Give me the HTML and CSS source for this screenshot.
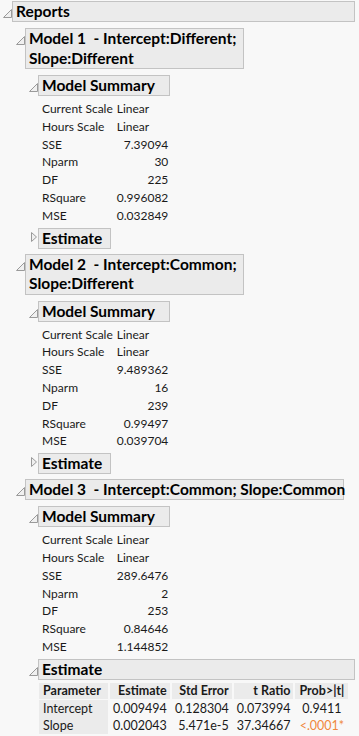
FILE: index.html
```html
<!DOCTYPE html>
<html lang="en">
<head>
  <meta charset="UTF-8">
  <meta name="viewport" content="width=device-width, initial-scale=1.0">
  <title>Reports</title>
  <link rel="stylesheet" href="styles.css">
</head>
<body>

  <div class="node">
    <div class="head">
      <svg class="tri" width="9" height="9" viewBox="0 0 9 9"><path d="M0.5 8.5 L8.5 8.5 L8.5 0.5 Z"/></svg>
      <div class="box box_reports">Reports</div>
    </div>
    <div class="body">

      <!-- Model 1 -->
      <div class="node">
        <div class="head">
          <svg class="tri" width="9" height="9" viewBox="0 0 9 9"><path d="M0.5 8.5 L8.5 8.5 L8.5 0.5 Z"/></svg>
          <div class="box box_model">Model 1 &nbsp;- Intercept:Different;<br>Slope:Different</div>
        </div>
        <div class="body">
          <div class="node">
            <div class="head">
              <svg class="tri" width="9" height="9" viewBox="0 0 9 9"><path d="M0.5 8.5 L8.5 8.5 L8.5 0.5 Z"/></svg>
              <div class="box box_summary">Model Summary</div>
            </div>
            <table class="summary">
              <tr><td>Current Scale</td><td class="txt">Linear</td></tr>
              <tr><td>Hours Scale</td><td class="txt">Linear</td></tr>
              <tr><td>SSE</td><td>7.39094</td></tr>
              <tr><td>Nparm</td><td>30</td></tr>
              <tr><td>DF</td><td>225</td></tr>
              <tr><td>RSquare</td><td>0.996082</td></tr>
              <tr><td>MSE</td><td>0.032849</td></tr>
            </table>
          </div>
          <div class="node">
            <div class="head">
              <svg class="tri closed" width="9" height="10" viewBox="0 0 9 10"><path d="M2.5 0.5 L7.5 5 L2.5 9.5 Z"/></svg>
              <div class="box box_est">Estimate</div>
            </div>
          </div>
        </div>
      </div>

      <!-- Model 2 -->
      <div class="node">
        <div class="head">
          <svg class="tri" width="9" height="9" viewBox="0 0 9 9"><path d="M0.5 8.5 L8.5 8.5 L8.5 0.5 Z"/></svg>
          <div class="box box_model">Model 2 &nbsp;- Intercept:Common;<br>Slope:Different</div>
        </div>
        <div class="body">
          <div class="node">
            <div class="head">
              <svg class="tri" width="9" height="9" viewBox="0 0 9 9"><path d="M0.5 8.5 L8.5 8.5 L8.5 0.5 Z"/></svg>
              <div class="box box_summary">Model Summary</div>
            </div>
            <table class="summary">
              <tr><td>Current Scale</td><td class="txt">Linear</td></tr>
              <tr><td>Hours Scale</td><td class="txt">Linear</td></tr>
              <tr><td>SSE</td><td>9.489362</td></tr>
              <tr><td>Nparm</td><td>16</td></tr>
              <tr><td>DF</td><td>239</td></tr>
              <tr><td>RSquare</td><td>0.99497</td></tr>
              <tr><td>MSE</td><td>0.039704</td></tr>
            </table>
          </div>
          <div class="node">
            <div class="head">
              <svg class="tri closed" width="9" height="10" viewBox="0 0 9 10"><path d="M2.5 0.5 L7.5 5 L2.5 9.5 Z"/></svg>
              <div class="box box_est">Estimate</div>
            </div>
          </div>
        </div>
      </div>

      <!-- Model 3 -->
      <div class="node">
        <div class="head">
          <svg class="tri" width="9" height="9" viewBox="0 0 9 9"><path d="M0.5 8.5 L8.5 8.5 L8.5 0.5 Z"/></svg>
          <div class="box box_model3">Model 3 &nbsp;- Intercept:Common; Slope:Common</div>
        </div>
        <div class="body">
          <div class="node">
            <div class="head">
              <svg class="tri" width="9" height="9" viewBox="0 0 9 9"><path d="M0.5 8.5 L8.5 8.5 L8.5 0.5 Z"/></svg>
              <div class="box box_summary">Model Summary</div>
            </div>
            <table class="summary">
              <tr><td>Current Scale</td><td class="txt">Linear</td></tr>
              <tr><td>Hours Scale</td><td class="txt">Linear</td></tr>
              <tr><td>SSE</td><td>289.6476</td></tr>
              <tr><td>Nparm</td><td>2</td></tr>
              <tr><td>DF</td><td>253</td></tr>
              <tr><td>RSquare</td><td>0.84646</td></tr>
              <tr><td>MSE</td><td>1.144852</td></tr>
            </table>
          </div>
          <div class="node">
            <div class="head">
              <svg class="tri" width="9" height="9" viewBox="0 0 9 9"><path d="M0.5 8.5 L8.5 8.5 L8.5 0.5 Z"/></svg>
              <div class="box box_est3">Estimate</div>
            </div>
            <table class="estimates">
              <tr>
                <th class="left">Parameter</th>
                <th class="c_est">Estimate</th>
                <th class="c_std">Std Error</th>
                <th class="c_t">t Ratio</th>
                <th class="c_p">Prob&gt;|t|</th>
              </tr>
              <tr>
                <td class="param">Intercept</td>
                <td>0.009494</td>
                <td>0.128304</td>
                <td>0.073994</td>
                <td class="c_p">0.9411</td>
              </tr>
              <tr>
                <td class="param">Slope</td>
                <td>0.002043</td>
                <td>5.471e-5</td>
                <td>37.34667</td>
                <td class="c_p sig">&lt;.0001*</td>
              </tr>
            </table>
          </div>
        </div>
      </div>

    </div>
  </div>

</body>
</html>
```

FILE: styles.css
```css
* {
  box-sizing: border-box;
  padding: 0;
  margin: 0;
}

body {
  background-color: #f8f8f8;
  font-family: "Lato", "Liberation Sans", sans-serif;
  color: #1a1a1a;
  padding: 1px 4px 0 3px;
}

.head {
  display: flex;
  align-items: flex-start;
}

.tri {
  flex: none;
  margin-top: 8px;
  fill: #f0f0f0;
  stroke: #9a9a9a;
  stroke-width: 1;
}
.tri.closed {
  margin-top: 4px;
}

.box {
  background-color: #ebebeb;
  border: 1px solid #c3c3c3;
  font-weight: bold;
  font-size: 15.5px;
  line-height: 19px;
  padding: 0 3px;
  color: #000;
  white-space: nowrap;
}

.body {
  padding-left: 13px;
}

.node {
  margin-top: 5px;
}
.node:first-child {
  margin-top: 0;
}
.body > .node:first-child {
  margin-top: 6px;
}

.box_reports {
  flex: 1;
}
.box_model {
  width: 219px;
  line-height: 19.5px;
}
.box_model3 {
  width: 319px;
}
.box_summary {
  width: 132px;
}
.box_est {
  width: 73px;
}
.box_est3 {
  flex: 1;
}

.summary {
  border-collapse: collapse;
  margin: 4px 0 -2px 13px;
  font-size: 12px;
  line-height: 17.8px;
}
.summary td {
  padding: 0;
  text-align: right;
  white-space: nowrap;
}
.summary td:first-child {
  text-align: left;
  width: 74px;
  padding-right: 4px;
}
.summary td.txt {
  text-align: left;
}
.summary td:last-child {
  width: 50px;
}

.estimates {
  border-collapse: separate;
  border-spacing: 2px 0;
  margin: 3px 0 0 8px;
  font-size: 12.5px;
  line-height: 17px;
  white-space: nowrap;
}
.estimates th {
  background-color: #ebebeb;
  border-bottom: 1px solid #f8f8f8;
  font-weight: bold;
  text-align: right;
  padding: 0 3px;
  line-height: 16px;
}
.estimates th.left {
  text-align: left;
  width: 69px;
  padding-left: 4px;
}
.estimates td {
  text-align: right;
  padding: 0 3px;
}
.estimates td.param {
  background-color: #ebebeb;
  text-align: left;
  padding-left: 4px;
}
.estimates .c_est {
  width: 57px;
}
.estimates .c_std {
  width: 60px;
}
.estimates .c_t {
  width: 59px;
}
.estimates .c_p {
  width: 53px;
  text-align: center;
}
.estimates .sig {
  color: #f0883c;
}
```
